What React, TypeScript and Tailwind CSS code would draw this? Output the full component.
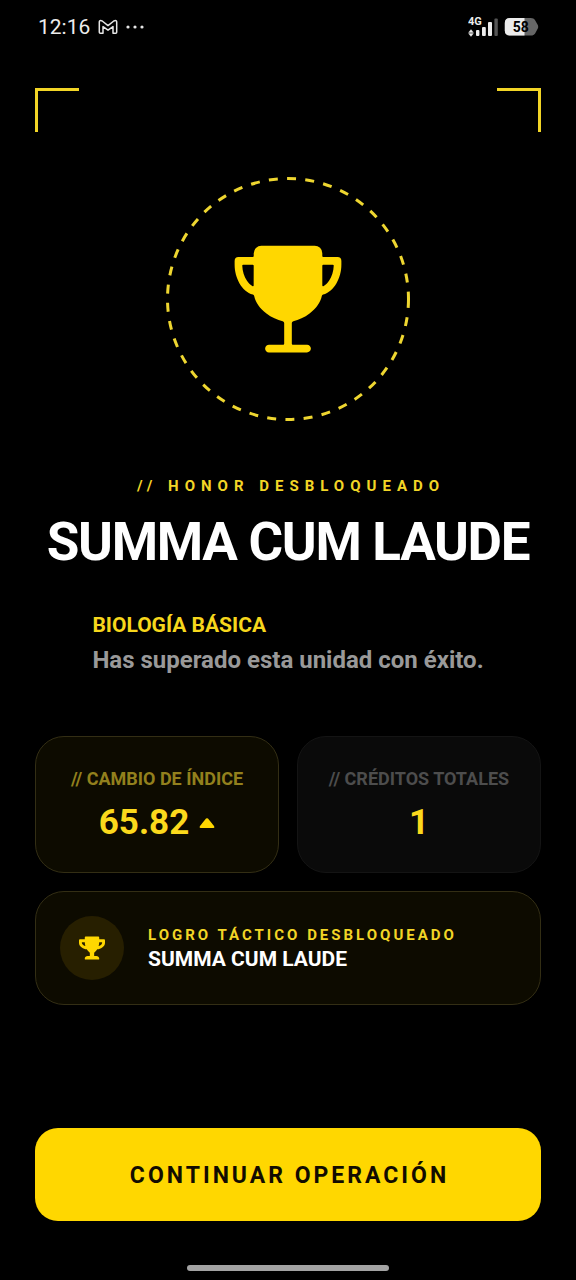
import { FaTrophy } from "react-icons/fa";
import { IoTrophy } from "react-icons/io5";

function GmailIcon() {
  return (
    <svg viewBox="0 0 20 16" className="h-4 w-5" fill="none" stroke="#e6e6e6" strokeWidth="1.5" strokeLinejoin="round" aria-hidden="true">
      <path d="M1.3 3 Q1.3 1.4 3 1.6 L4.2 2 L10 6.6 L15.8 2 L17 1.6 Q18.7 1.4 18.7 3 V13.2 Q18.7 14.2 17.7 14.2 H15 V7.6 L10 11.2 L5 7.6 V14.2 H2.3 Q1.3 14.2 1.3 13.2 Z" />
    </svg>
  );
}

function SignalIcon() {
  return (
    <svg viewBox="0 -6 30 32" className="h-8 w-[30px]" fill="#ececec" role="img" aria-label="4G">
      <text x="0" y="7.6" fontFamily="Roboto, sans-serif" fontSize="11" fontWeight="700">4G</text>
      <path d="M3 12.6 L5.4 15.4 H0.6 Z M3 19.4 L5.4 16.6 H0.6 Z" stroke="#ececec" strokeWidth="0.4" />
      <rect x="8" y="13" width="3.4" height="6" rx="1" />
      <rect x="14" y="10" width="3.8" height="9" rx="1" />
      <rect x="20" y="5" width="4" height="14" rx="1" />
      <rect x="26.4" y="1.6" width="3.4" height="17.4" rx="1" fill="#555" />
    </svg>
  );
}

function BatteryIcon() {
  return (
    <svg viewBox="0 0 36 20" className="h-5 w-9" role="img" aria-label="58">
      <path d="M6 1 H26.5 Q30.5 1 31.8 4.4 L33.8 8 Q34.6 9.8 33.8 11.6 L31.8 15.2 Q30.5 18.6 26.5 18.6 H6 Q0.8 18.6 0.8 13.6 V6 Q0.8 1 6 1 Z" fill="#666" />
      <path d="M6 1 H20.5 V18.6 H6 Q0.8 18.6 0.8 13.6 V6 Q0.8 1 6 1 Z" fill="#ececec" />
      <text x="16.8" y="14.8" textAnchor="middle" fontFamily="Roboto, sans-serif" fontSize="14" fontWeight="700" fill="#000">58</text>
    </svg>
  );
}

function StatusBar() {
  return (
    <div className="flex h-[54px] items-center justify-between pr-9 pl-[38px]">
      <div className="flex items-center gap-2">
        <span className="text-[21px] leading-6 text-[#ececec]">12:16</span>
        <GmailIcon />
        <svg viewBox="0 0 18 4" className="h-1 w-[18px]" fill="#e6e6e6" aria-hidden="true">
          <circle cx="2" cy="2" r="1.6" />
          <circle cx="9" cy="2" r="1.6" />
          <circle cx="16" cy="2" r="1.6" />
        </svg>
      </div>
      <div className="flex items-center gap-[6px]">
        <SignalIcon />
        <BatteryIcon />
      </div>
    </div>
  );
}

function Emblem() {
  return (
    <div className="grid size-[244px] place-items-center">
      <svg viewBox="0 0 244 244" className="col-start-1 row-start-1 size-full" aria-hidden="true">
        <circle cx="122" cy="122" r="120.5" fill="none" stroke="#eed630" strokeWidth="3" strokeDasharray="9 9.28" />
      </svg>
      <IoTrophy className="col-start-1 row-start-1 size-[122px] text-[#ffd700]" />
    </div>
  );
}

export default function App() {
  return (
    <div className="flex min-h-screen flex-col bg-black font-[Roboto,sans-serif] text-white">
      <StatusBar />
      <main className="flex flex-1 flex-col px-[35px] pt-[34px]">
        <div className="flex justify-between" aria-hidden="true">
          <div className="size-11 border-t-3 border-l-3 border-[#f2d526]" />
          <div className="size-11 border-t-3 border-r-3 border-[#f2d526]" />
        </div>
        <div className="mt-[45px] flex justify-center">
          <Emblem />
        </div>
        <p className="mt-[54px] pl-[6px] text-center text-[15px] leading-[22px] font-bold tracking-[6px] text-[#f2d526]">// HONOR DESBLOQUEADO</p>
        <h1 className="mt-[15px] text-center text-[53px] leading-[60px] font-bold tracking-tight whitespace-nowrap">SUMMA CUM LAUDE</h1>
        <div className="mt-[39px] self-center">
          <h2 className="text-[21px] leading-7 font-bold text-[#f7d71c]">BIOLOGÍA BÁSICA</h2>
          <p className="mt-1 text-[24px] leading-[34px] font-bold text-[#999]">Has superado esta unidad con éxito.</p>
        </div>
        <dl className="mt-[59px] grid grid-cols-2 gap-[18px]">
          <div className="flex flex-col items-center rounded-[29px] border border-[#332e14] bg-[#0d0b00] pt-[30px] pb-7">
            <dt className="text-[18px] leading-6 font-bold text-[#92801d]">// CAMBIO DE ÍNDICE</dt>
            <dd className="mt-[11px] flex items-center gap-[10px] text-[35px] leading-[42px] font-bold text-[#fbd91c]">
              65.82
              <svg viewBox="0 0 16 10" className="h-[10px] w-4" fill="#ffd700" aria-hidden="true">
                <path d="M7 0.6 Q8 -0.2 9 0.6 L15 8 Q16 10 14.4 10 H1.6 Q0 10 1 8 Z" />
              </svg>
            </dd>
          </div>
          <div className="flex flex-col items-center rounded-[29px] border border-[#141414] bg-[#0a0a0a] pt-[30px] pb-7">
            <dt className="text-[18px] leading-6 font-bold text-[#4d4d4d]">// CRÉDITOS TOTALES</dt>
            <dd className="mt-[11px] text-[35px] leading-[42px] font-bold text-[#fbd91c]">1</dd>
          </div>
        </dl>
        <section className="mt-[18px] flex items-center gap-6 rounded-[29px] border border-[#332e14] bg-[#0d0b00] p-6">
          <div className="flex size-16 items-center justify-center rounded-full bg-[#271f00]">
            <FaTrophy className="size-[26px] text-[#ffd700]" />
          </div>
          <div>
            <p className="text-[15px] leading-5 font-bold tracking-[3px] text-[#f2d526]">LOGRO TÁCTICO DESBLOQUEADO</p>
            <p className="mt-[2px] text-[21px] leading-6 font-bold">SUMMA CUM LAUDE</p>
          </div>
        </section>
        <div className="mt-auto pb-[59px]">
          <button type="button" className="h-[93px] w-full rounded-[23px] bg-[#ffd700] pt-[2px] pl-[3px] text-[23px] leading-8 font-bold tracking-[3px] text-[#120c00]">
            CONTINUAR OPERACIÓN
          </button>
        </div>
      </main>
      <div className="absolute bottom-[9px] left-1/2 h-[6px] w-[202px] -translate-x-1/2 rounded-full bg-[#a3a3a3]" />
    </div>
  );
}
